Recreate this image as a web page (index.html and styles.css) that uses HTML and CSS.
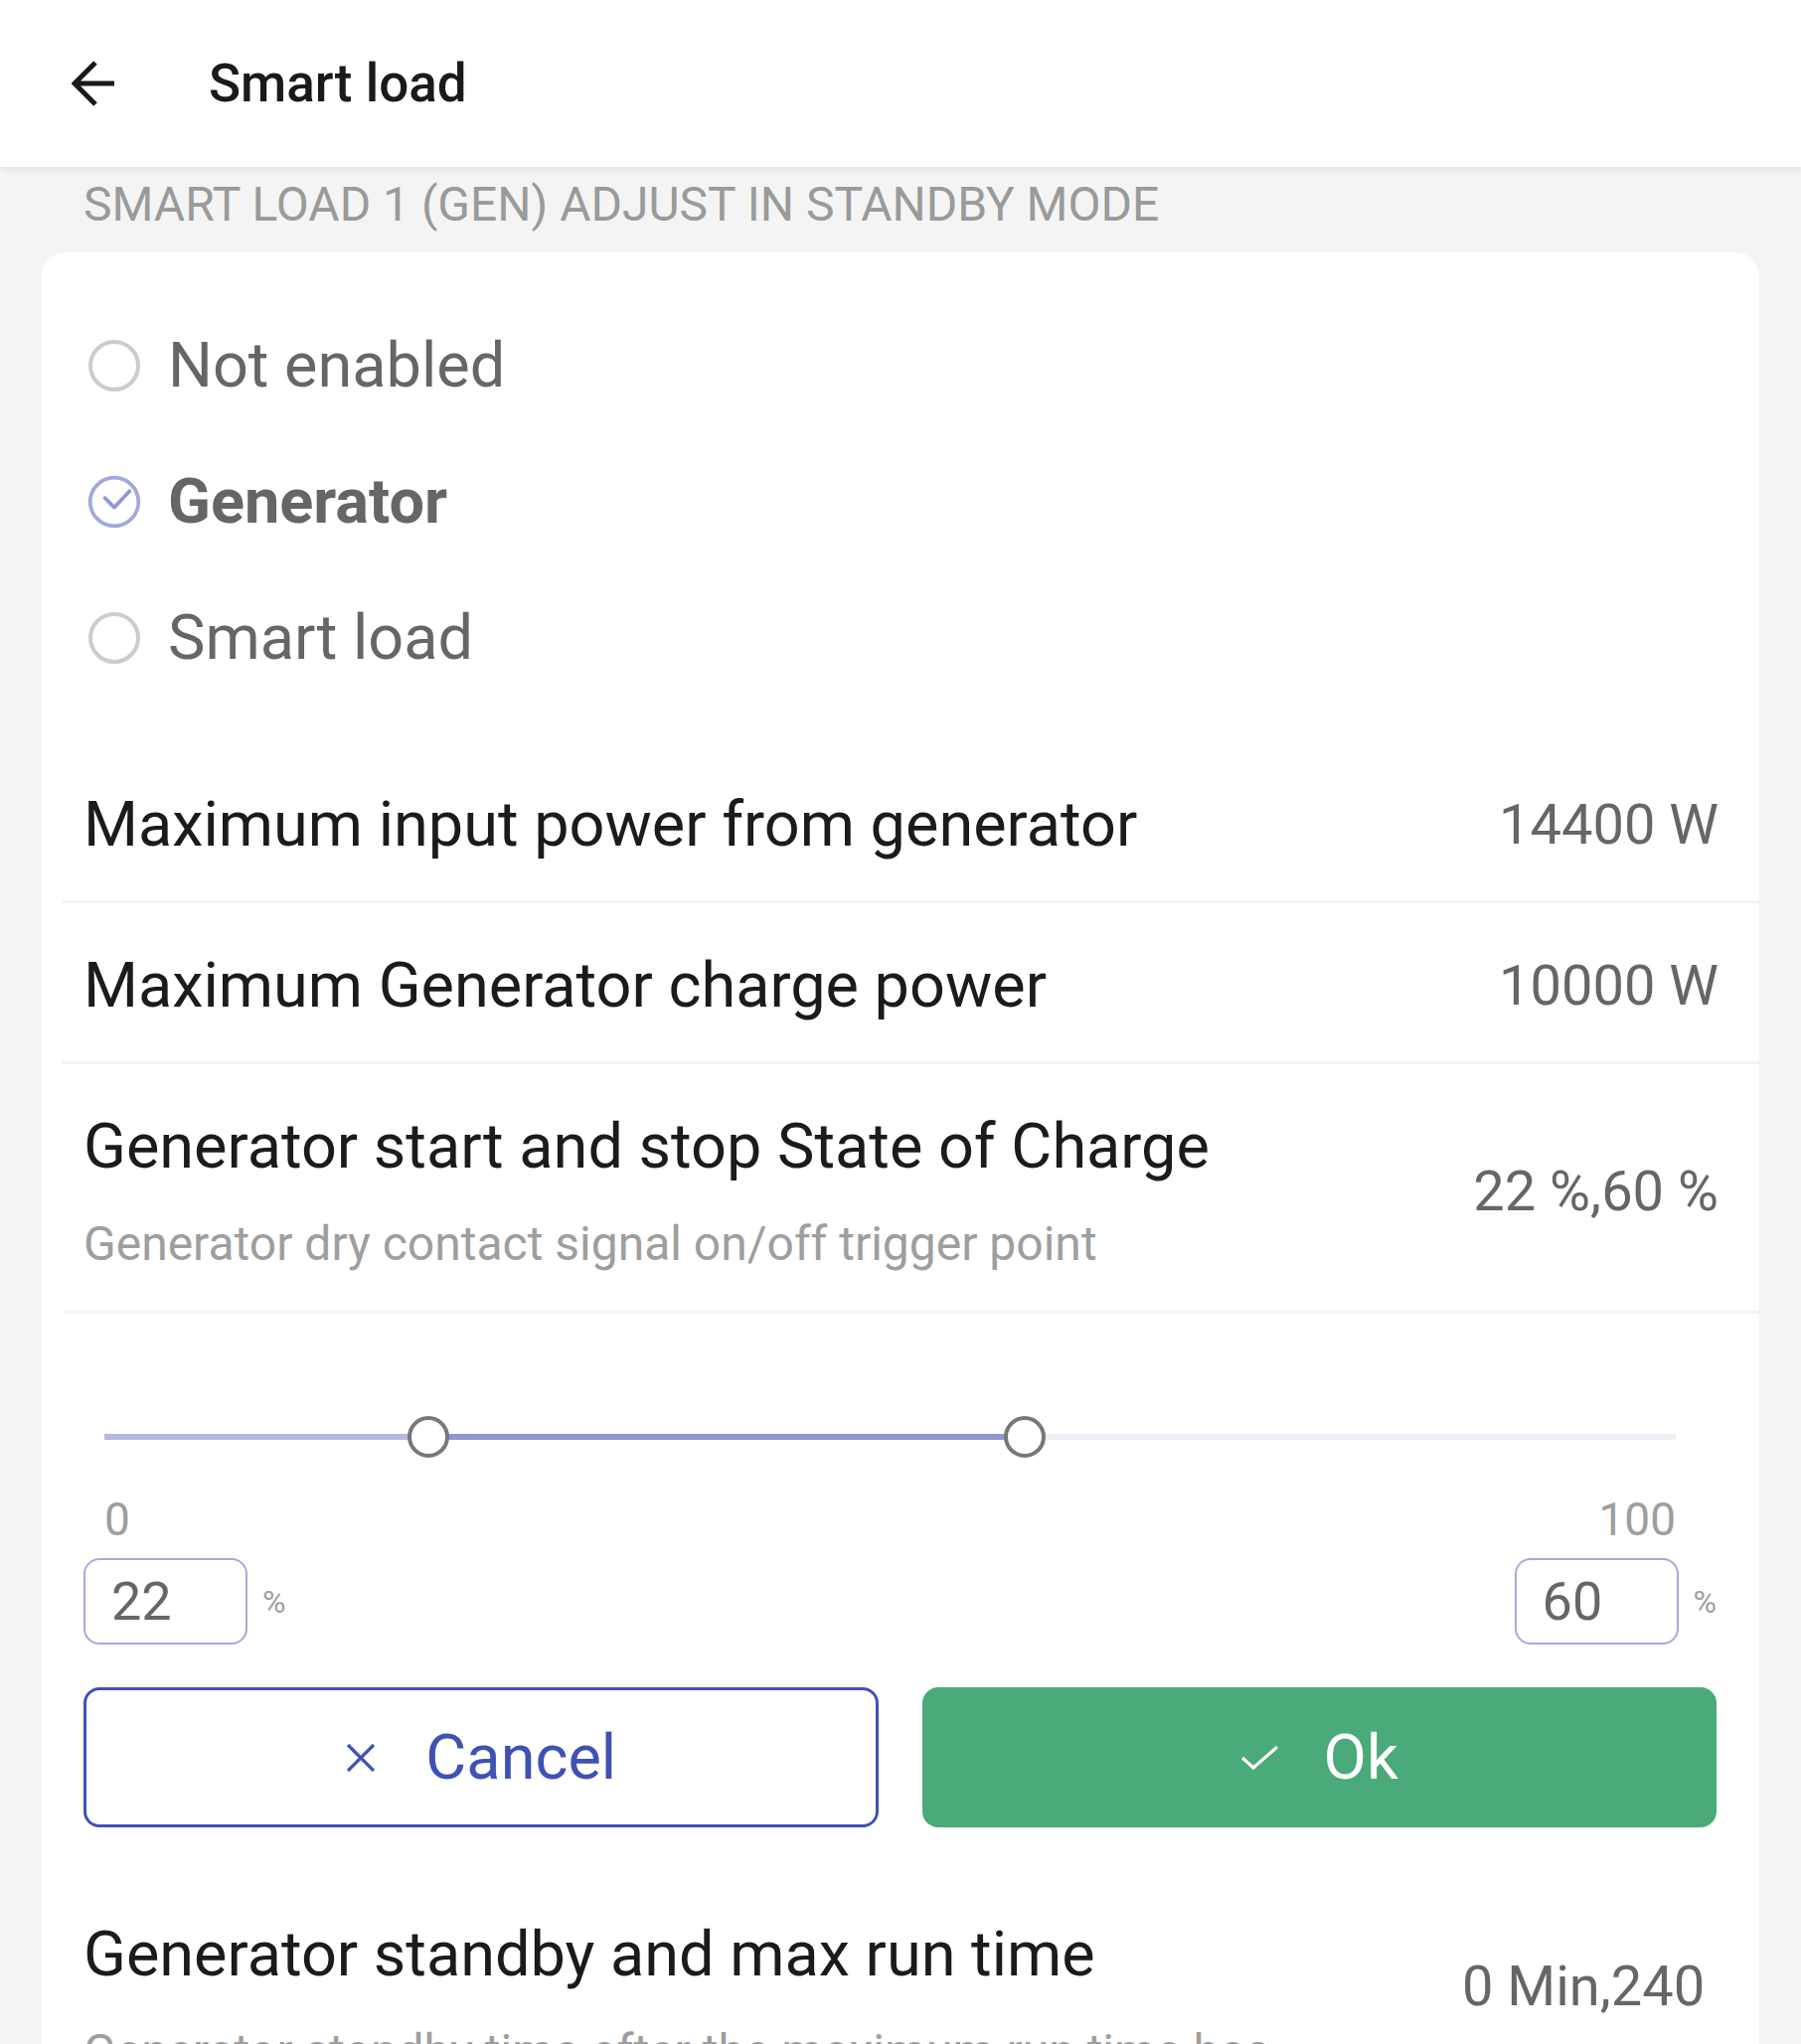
FILE: index.html
```html
<!DOCTYPE html>
<html lang="en">
<head>
<meta charset="utf-8">
<title>Smart load</title>
<link rel="stylesheet" href="styles.css">
</head>
<body>
<div class="app">
  <header class="topbar">
    <svg class="back" viewBox="0 0 44 46" aria-label="Back">
      <path d="M3 23 H43 M24 2 L3 23 L24 44" fill="none" stroke="#1a1a1a" stroke-width="5"/>
    </svg>
    <h1 class="title">Smart load</h1>
  </header>

  <div class="section-title">SMART LOAD 1 (GEN) ADJUST IN STANDBY MODE</div>

  <section class="card">
    <ul class="radios">
      <li class="radio">
        <span class="radio-mark"><span class="ring"></span></span>
        <span class="radio-label">Not enabled</span>
      </li>
      <li class="radio checked">
        <span class="radio-mark">
          <svg viewBox="0 0 60 60" width="60" height="60">
            <circle cx="30" cy="30" r="26" fill="none" stroke="#a2a8dd" stroke-width="4"/>
            <path d="M20 26 L30 36 L46.5 18.5" fill="none" stroke="#8f97d6" stroke-width="4" stroke-linecap="round" stroke-linejoin="round"/>
          </svg>
        </span>
        <span class="radio-label">Generator</span>
      </li>
      <li class="radio">
        <span class="radio-mark"><span class="ring"></span></span>
        <span class="radio-label">Smart load</span>
      </li>
    </ul>

    <div class="row">
      <div class="row-text">
        <div class="row-title">Maximum input power from generator</div>
      </div>
      <div class="row-value">14400 W</div>
    </div>

    <div class="row">
      <div class="row-text">
        <div class="row-title">Maximum Generator charge power</div>
      </div>
      <div class="row-value">10000 W</div>
    </div>

    <div class="row">
      <div class="row-text">
        <div class="row-title">Generator start and stop State of Charge</div>
        <div class="row-sub">Generator dry contact signal on/off trigger point</div>
      </div>
      <div class="row-value">22 %,60 %</div>
    </div>

    <div class="range-section">
      <div class="slider">
        <div class="track"></div>
        <div class="track-low" style="width:20.6%"></div>
        <div class="track-mid" style="left:20.6%;width:38%"></div>
        <span class="thumb" style="left:20.6%"></span>
        <span class="thumb" style="left:58.6%"></span>
      </div>
      <div class="range-labels">
        <span>0</span>
        <span>100</span>
      </div>
      <div class="range-inputs">
        <div class="input-group">
          <span class="num-box">22</span>
          <span class="unit">%</span>
        </div>
        <div class="input-group">
          <span class="num-box">60</span>
          <span class="unit">%</span>
        </div>
      </div>
      <div class="actions">
        <button class="btn btn-cancel" type="button">
          <svg class="btn-icon" viewBox="0 0 32 32" width="32" height="32">
            <path d="M3 3 L29 29 M29 3 L3 29" fill="none" stroke="#3f51b5" stroke-width="3.2"/>
          </svg>
          <span>Cancel</span>
        </button>
        <button class="btn btn-ok" type="button">
          <svg class="btn-icon" viewBox="0 0 40 26" width="40" height="26">
            <path d="M2 13 L13 23 L37 2" fill="none" stroke="#ffffff" stroke-width="3.2"/>
          </svg>
          <span>Ok</span>
        </button>
      </div>
    </div>

    <div class="row last">
      <div class="row-text">
        <div class="row-title">Generator standby and max run time</div>
        <div class="row-sub">Generator standby time after the maximum run time has been reached</div>
      </div>
      <div class="row-value">0 Min,240 Min</div>
    </div>
  </section>
</div>
</body>
</html>
```

FILE: styles.css
```css
* {
  box-sizing: border-box;
}

html,
body {
  margin: 0;
  padding: 0;
}

body {
  font-family: Roboto, "Noto Sans", "Liberation Sans", sans-serif;
  background: #f4f4f4;
}

.app {
  height: 100vh;
  overflow: hidden;
}

/* Top bar */
.topbar {
  position: relative;
  z-index: 1;
  height: 168px;
  display: flex;
  align-items: center;
  padding-left: 72px;
  background: #ffffff;
  box-shadow: 0 3px 6px rgba(0, 0, 0, 0.07);
}

.back {
  display: block;
  width: 44px;
  height: 46px;
}

.title {
  margin: 0 0 0 94px;
  font-size: 53px;
  font-weight: 500;
  line-height: 1;
  color: #1a1a1a;
}

/* Section caption */
.section-title {
  padding: 10px 0 20px 84px;
  font-size: 48px;
  line-height: 56px;
  color: #9a9a9a;
}

/* Card */
.card {
  margin: 0 42px;
  background: #ffffff;
  border-radius: 24px;
}

.radios {
  list-style: none;
  margin: 0 0 37px;
  padding: 45px 0 0 45px;
}

.radio {
  height: 137px;
  display: flex;
  align-items: center;
  gap: 26px;
  font-size: 63px;
  color: #666666;
}

.radio.checked {
  font-weight: 700;
}

.radio-mark {
  width: 56px;
  height: 56px;
  display: flex;
  align-items: center;
  justify-content: center;
  flex-shrink: 0;
}

.radio-mark svg {
  width: 60px;
  height: 60px;
}

.ring {
  width: 52px;
  height: 52px;
  border: 4px solid #cccccc;
  border-radius: 50%;
}

/* Setting rows */
.row {
  margin-left: 21px;
  padding: 46px 41px 39px 21px;
  display: flex;
  align-items: center;
  justify-content: space-between;
  gap: 64px;
  border-bottom: 3px solid #f3f3f3;
}

.row.last {
  border-bottom: none;
}

.row-text {
  flex: 1;
  min-width: 0;
}

.row-title {
  font-size: 63px;
  line-height: 74px;
  color: #1b1b1b;
}

.row-sub {
  margin-top: 33px;
  font-size: 48px;
  line-height: 56px;
  color: #9e9e9e;
}

.row-value {
  flex-shrink: 0;
  max-width: 300px;
  margin: -4px 0;
  font-size: 56px;
  line-height: 82px;
  color: #666666;
  text-align: right;
  white-space: break-spaces;
}

/* Range editor */
.range-section {
  margin-left: 21px;
  padding: 103px 43px 45px 21px;
}

.slider {
  position: relative;
  height: 42px;
  margin: 0 41px 0 21px;
}

.track,
.track-low,
.track-mid {
  position: absolute;
  top: 18px;
  height: 6px;
}

.track {
  left: 0;
  right: 0;
  background: #eff0f6;
}

.track-low {
  left: 0;
  background: #b3b9e0;
}

.track-mid {
  background: #8e96d0;
}

.thumb {
  position: absolute;
  top: 0;
  width: 42px;
  height: 42px;
  transform: translateX(-50%);
  border: 4px solid #777777;
  border-radius: 50%;
  background: #ffffff;
}

.range-labels {
  display: flex;
  justify-content: space-between;
  margin: 36px 41px 0 21px;
  font-size: 46px;
  line-height: 53px;
  color: #9e9e9e;
}

.range-inputs {
  display: flex;
  justify-content: space-between;
  margin-top: 12px;
}

.input-group {
  display: flex;
  align-items: center;
  gap: 15px;
}

.num-box {
  display: flex;
  align-items: center;
  width: 165px;
  height: 87px;
  padding-left: 26px;
  border: 2px solid #a4aadb;
  border-radius: 16px;
  font-size: 54px;
  color: #666666;
}

.unit {
  font-size: 32px;
  color: #9e9e9e;
}

.actions {
  display: grid;
  grid-template-columns: 1fr 1fr;
  gap: 44px;
  margin-top: 43px;
}

.btn {
  height: 141px;
  display: flex;
  align-items: center;
  justify-content: center;
  border-radius: 16px;
  font-family: inherit;
  font-size: 63px;
  cursor: pointer;
}

.btn-cancel {
  gap: 49px;
  background: #ffffff;
  border: 3px solid #3f51b5;
  color: #3f51b5;
}

.btn-ok {
  gap: 44px;
  background: #4aaa79;
  border: none;
  color: #ffffff;
}

.btn-icon {
  display: block;
  flex-shrink: 0;
}
```
